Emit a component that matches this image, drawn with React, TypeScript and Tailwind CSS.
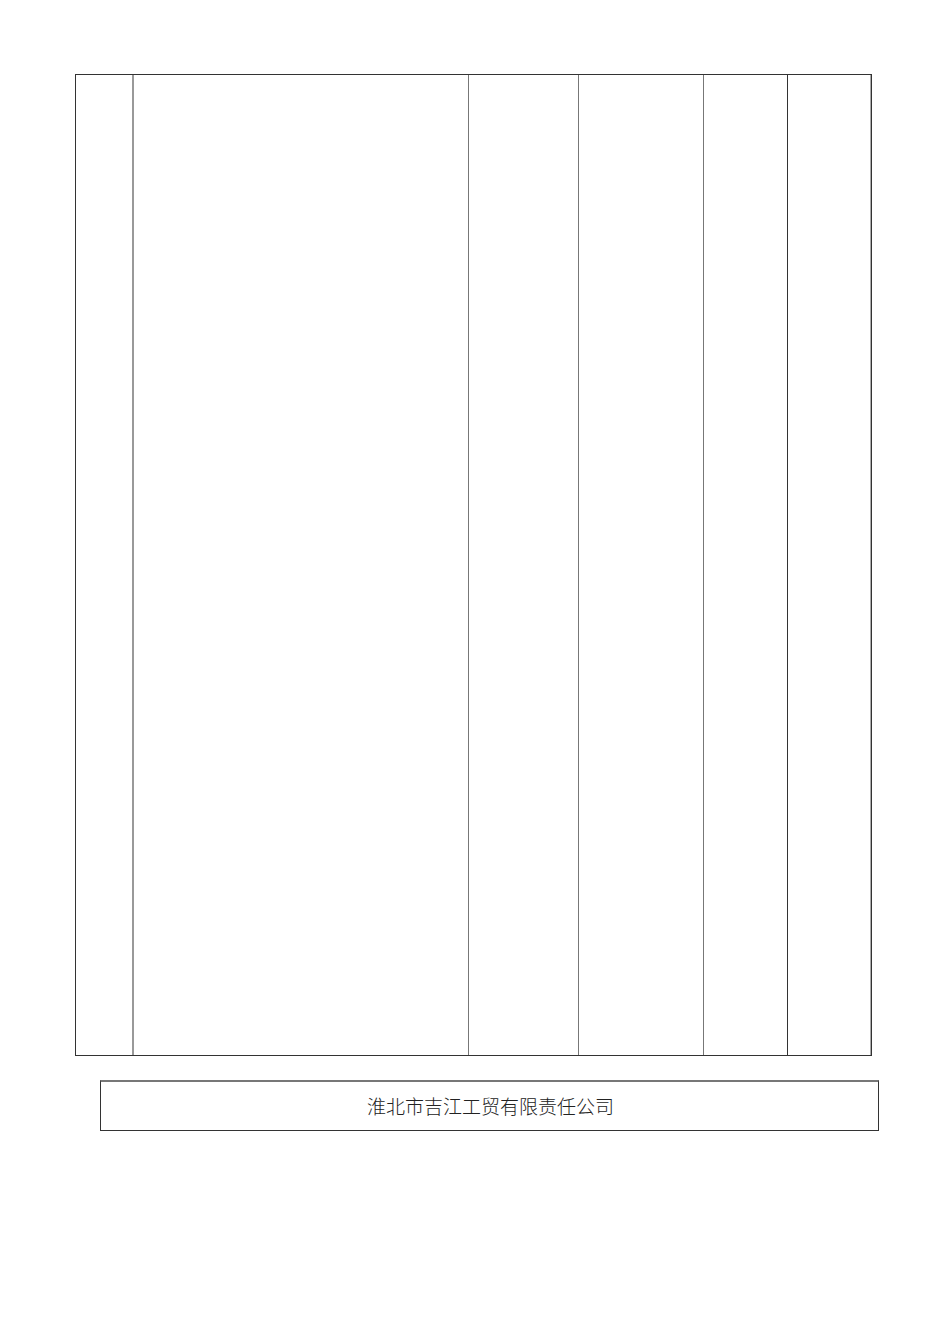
export default function App() {
  return (
    <div className="w-[950px] h-[1344px] bg-white relative" style={{ fontFamily: '"Noto Sans CJK SC", sans-serif' }}>
      <div className="pt-[74px] pl-[75px]">
        <div className="flex w-[797px] h-[982px] border border-[#333]">
          <div className="w-[58px] border-r-2 border-[#999]" />
          <div className="w-[335px] border-r border-[#777]" />
          <div className="w-[110px] border-r border-[#777]" />
          <div className="w-[125px] border-r border-[#777]" />
          <div className="w-[84px] border-r border-[#333]" />
          <div className="flex-1 border-r border-[#aaa]" />
        </div>
      </div>
      <div className="ml-[100px] mt-[24px] w-[779px] h-[51px] border border-[#333] border-t-2 border-t-[#777] flex items-center justify-center">
        <span className="text-[19px] font-light text-[#222] pl-[2px]">淮北市吉江工贸有限责任公司</span>
      </div>
    </div>
  );
}
